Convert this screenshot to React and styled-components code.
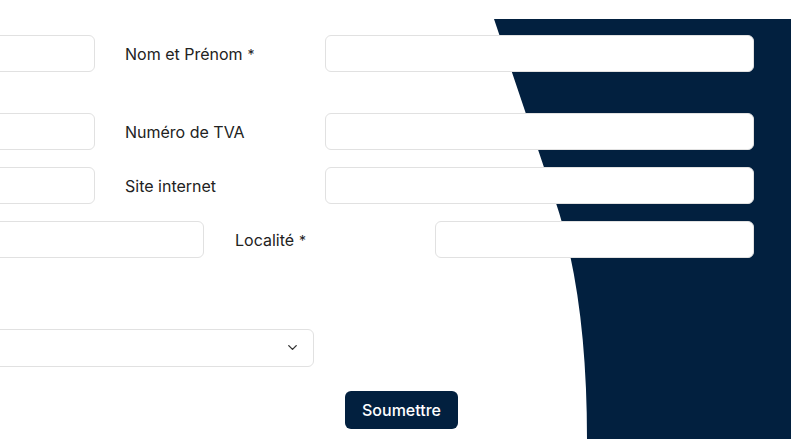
import React from "react";
import styled, { createGlobalStyle } from "styled-components";

const GlobalStyle = createGlobalStyle`
  html, body {
    margin: 0;
    padding: 0;
    background: #ffffff;
    overflow: hidden;
  }
  body {
    font-family: Inter, "Liberation Sans", sans-serif;
    color: #222222;
  }
`;

const Page = styled.div`
  position: relative;
  width: 791px;
  height: 439px;
  overflow: hidden;
  background: #ffffff;
`;

const Backdrop = styled.svg`
  position: absolute;
  top: 0;
  left: 0;
  width: 791px;
  height: 439px;
  z-index: 0;
`;

const Form = styled.form`
  position: relative;
  z-index: 1;
  display: flex;
  flex-direction: column;
  margin-left: -205px;
  padding-top: 35px;
`;

const Row = styled.div`
  display: flex;
  align-items: center;
  height: 37px;
  margin-top: ${(p) => p.$gap || 0}px;
`;

const Field = styled.input`
  box-sizing: border-box;
  width: ${(p) => p.$w}px;
  height: 37px;
  border: 1px solid #e1e1e1;
  border-radius: 6px;
  background: #ffffff;
  outline: none;
  font: inherit;
  padding: 0 12px;
`;

const Label = styled.label`
  box-sizing: border-box;
  width: ${(p) => p.$w}px;
  padding-left: ${(p) => p.$pad}px;
  font-size: 16px;
  color: #222222;
  white-space: nowrap;

  span {
    font-size: 14px;
    margin-left: 5px;
  }
`;

const Select = styled.div`
  box-sizing: border-box;
  width: 519px;
  height: 38px;
  border: 1px solid #e1e1e1;
  border-radius: 6px;
  background: #ffffff;
  display: flex;
  align-items: center;
  justify-content: flex-end;
  padding-right: 13px;
  color: #333333;
`;

const Submit = styled.button`
  margin-left: 550px;
  height: 38px;
  padding: 0 17px;
  border: none;
  border-radius: 6px;
  background: #02203f;
  color: #ffffff;
  font-family: Inter, "Liberation Sans", sans-serif;
  font-size: 16px;
  font-weight: 500;
  cursor: pointer;
`;

const Chevron = () => (
  <svg width="15" height="15" viewBox="0 0 24 24" fill="none" stroke="currentColor" strokeWidth="2.2" strokeLinecap="round" strokeLinejoin="round">
    <path d="m6 9 6 6 6-6" />
  </svg>
);

const Req = () => <span>*</span>;

export default function App() {
  return (
    <>
      <GlobalStyle />
      <Page>
        <Backdrop viewBox="0 0 791 439">
          <path d="M494 19 L791 19 L791 439 L587 439 Q587 294 555 200 Z" fill="#02203f" />
        </Backdrop>
        <Form onSubmit={(e) => e.preventDefault()}>
          <Row>
            <Field $w={300} />
            <Label $w={230} $pad={30}>Nom et Prénom<Req /></Label>
            <Field $w={429} />
          </Row>
          <Row $gap={41}>
            <Field $w={300} />
            <Label $w={230} $pad={30}>Numéro de TVA</Label>
            <Field $w={429} />
          </Row>
          <Row $gap={17}>
            <Field $w={300} />
            <Label $w={230} $pad={30}>Site internet</Label>
            <Field $w={429} />
          </Row>
          <Row $gap={17}>
            <Field $w={409} />
            <Label $w={231} $pad={31}>Localité<Req /></Label>
            <Field $w={319} />
          </Row>
          <Row $gap={71}>
            <Select>
              <Chevron />
            </Select>
          </Row>
          <Row $gap={25}>
            <Submit type="submit">Soumettre</Submit>
          </Row>
        </Form>
      </Page>
    </>
  );
}
